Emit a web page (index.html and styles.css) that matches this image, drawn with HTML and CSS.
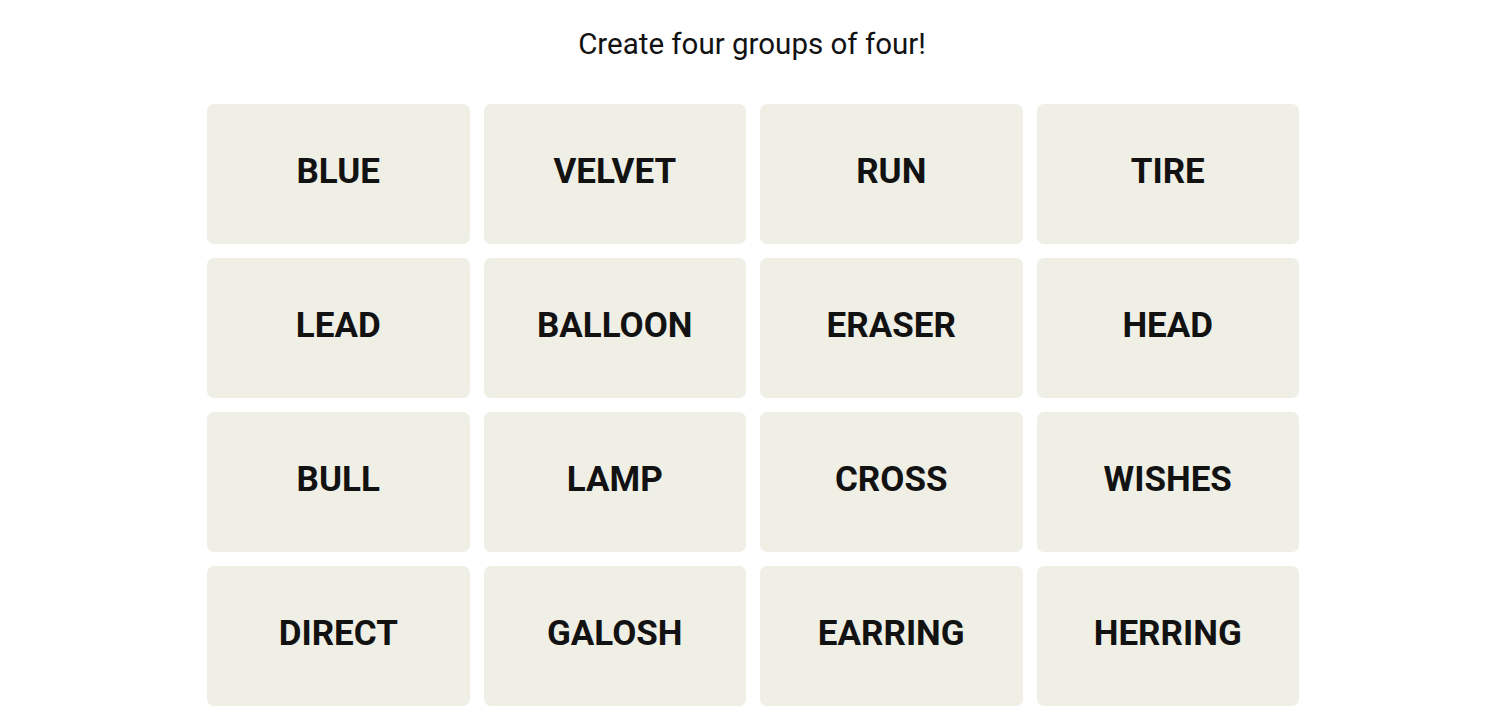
FILE: index.html
```html
<!DOCTYPE html>
<html lang="en">
<head>
    <meta charset="UTF-8">
    <meta name="viewport" content="width=device-width, initial-scale=1.0">
    <title>Connections</title>
    <link rel="stylesheet" href="styles.css">
</head>
<body>
    <main class="game">
        <p class="prompt">Create four groups of four!</p>

        <div class="board">
            <button class="tile">BLUE</button>
            <button class="tile">VELVET</button>
            <button class="tile">RUN</button>
            <button class="tile">TIRE</button>

            <button class="tile">LEAD</button>
            <button class="tile">BALLOON</button>
            <button class="tile">ERASER</button>
            <button class="tile">HEAD</button>

            <button class="tile">BULL</button>
            <button class="tile">LAMP</button>
            <button class="tile">CROSS</button>
            <button class="tile">WISHES</button>

            <button class="tile">DIRECT</button>
            <button class="tile">GALOSH</button>
            <button class="tile">EARRING</button>
            <button class="tile">HERRING</button>
        </div>
    </main>
</body>
</html>
```

FILE: styles.css
```css
body {
    margin: 0;
    background: #ffffff;
    font-family: Roboto, "Liberation Sans", sans-serif;
    color: #121212;
}
.game {
    display: flex;
    flex-direction: column;
    align-items: center;
}
.prompt {
    margin: 25px 0 0;
    padding-left: 4px;
    font-size: 29.5px;
    line-height: 38px;
    font-weight: 400;
}
.board {
    display: grid;
    grid-template-columns: repeat(4, 262.5px);
    grid-auto-rows: 140px;
    gap: 14px;
    margin-top: 41px;
    padding-left: 6px;
}
.tile {
    background: #efefe6;
    border: none;
    border-radius: 7px;
    font-family: Roboto, "Liberation Sans", sans-serif;
    font-size: 35px;
    font-weight: 700;
    color: #121212;
    cursor: pointer;
    padding: 0 0 5px;
}
```
